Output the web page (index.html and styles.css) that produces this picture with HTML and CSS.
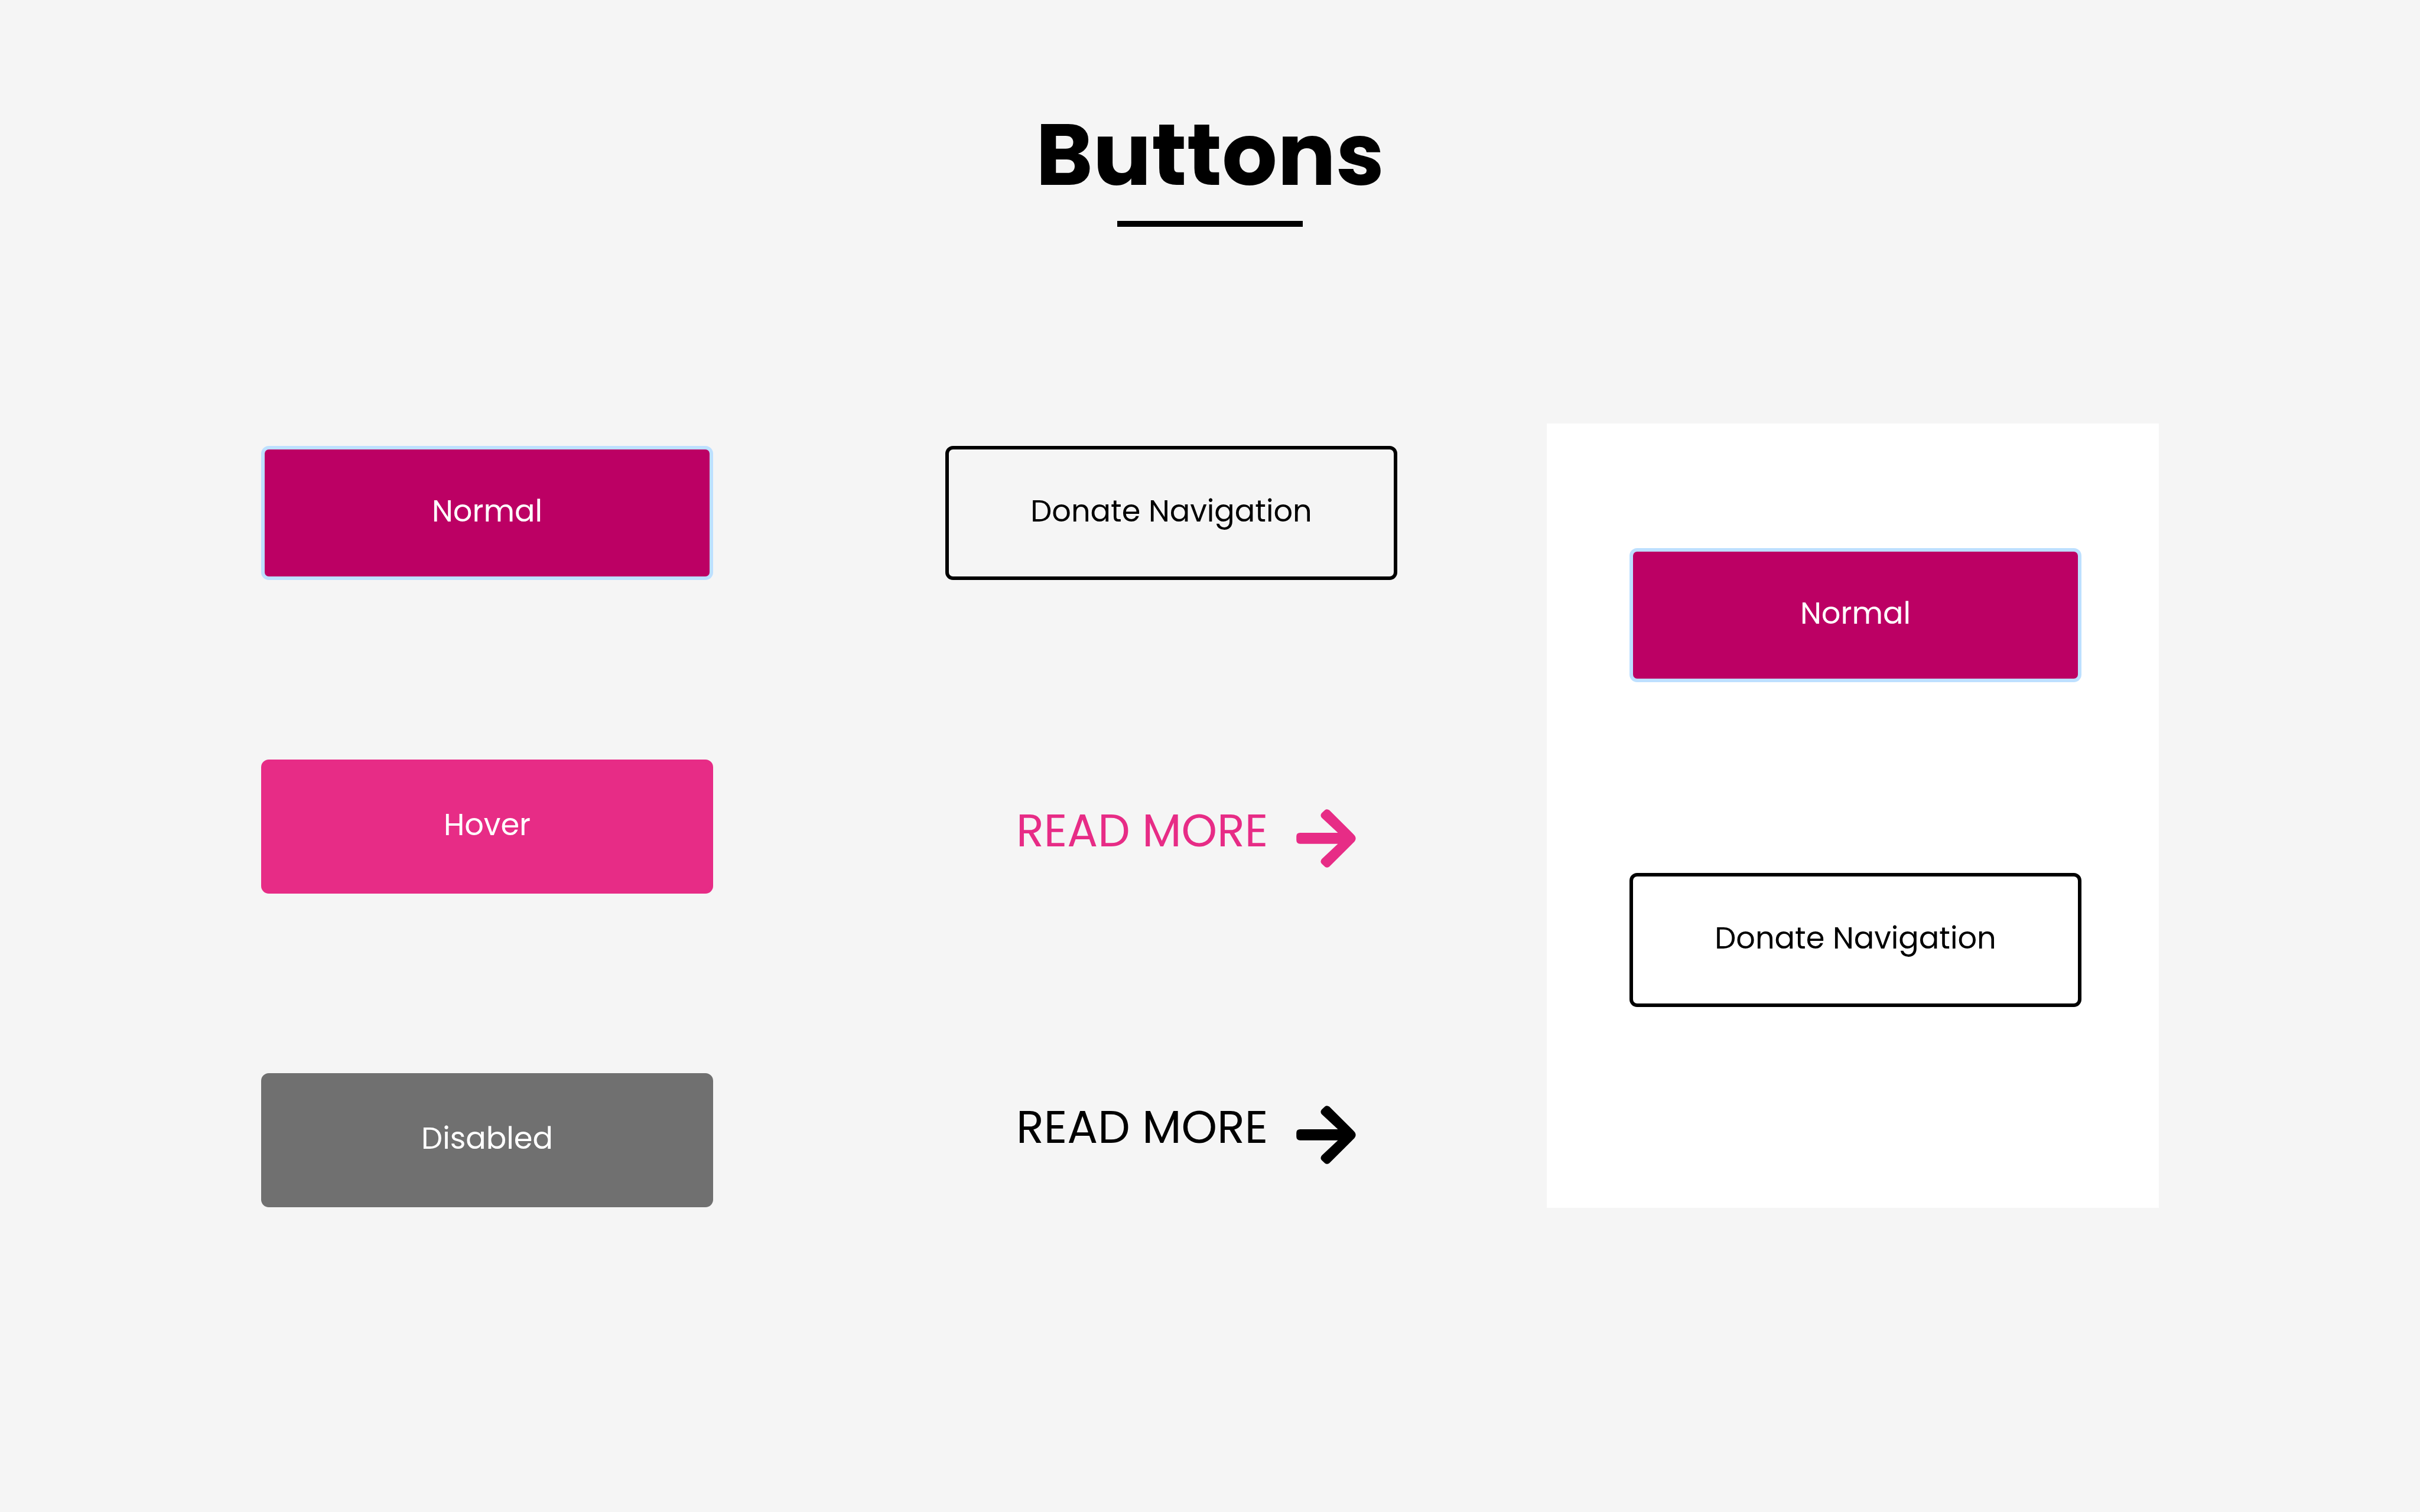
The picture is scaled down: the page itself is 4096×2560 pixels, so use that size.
FILE: index.html
```html
<!DOCTYPE html>
<html lang="en">
<head>
<meta charset="utf-8">
<meta name="viewport" content="width=device-width, initial-scale=1">
<title>Buttons</title>
<link rel="stylesheet" href="styles.css">
</head>
<body>
<svg class="sprite" width="0" height="0" aria-hidden="true">
  <symbol id="arrow" viewBox="0 0 126 124">
    <path d="M8 50H88L54 18.500Q49.500 13.500 53.500 8.500L60.500 1.800Q65 -1.500 70 2.200L120.500 52.500Q131 62 120.500 71.500L70 121.800Q65 125.500 60.500 122.200L53.500 115.500Q49.500 110.500 54 105.500L88 73.500H8Q0 73.500 0 65.500V58Q0 50 8 50Z"/>
  </symbol>
</svg>
<header class="heading">
  <h1 class="title">Buttons</h1>
  <div class="rule"></div>
</header>
<main class="samples">
  <section class="column states">
    <button class="btn primary" type="button">Normal</button>
    <button class="btn hovered" type="button">Hover</button>
    <button class="btn disabled" type="button" disabled>Disabled</button>
  </section>
  <section class="column">
    <button class="btn outline" type="button">Donate Navigation</button>
    <nav class="links">
      <a class="more accent" href="#more"><span class="more-text">READ MORE</span><svg class="arrow" aria-hidden="true"><use href="#arrow"/></svg></a>
      <a class="more" href="#more"><span class="more-text">READ MORE</span><svg class="arrow" aria-hidden="true"><use href="#arrow"/></svg></a>
    </nav>
  </section>
  <section class="panel">
    <button class="btn primary" type="button">Normal</button>
    <button class="btn outline" type="button">Donate Navigation</button>
  </section>
</main>
</body>
</html>
```
FILE: styles.css
```css
* {
  box-sizing: border-box;
}

body {
  margin: 0;
  background: #f5f5f5;
  color: #000;
  font-family: Poppins, Inter, sans-serif;
}

.sprite {
  display: block;
}

.heading {
  display: flex;
  flex-direction: column;
  align-items: center;
  gap: 22px;
  padding-top: 172px;
}

.title {
  margin: 0;
  font-size: 147px;
  line-height: 180px;
  font-weight: 700;
}

.rule {
  width: 314px;
  height: 10px;
  background: #000;
}

.samples {
  display: grid;
  grid-template-columns: 1158fr 1018fr 1036fr;
  padding: 333px 442px 0;
}

.column {
  display: flex;
  flex-direction: column;
  align-items: flex-start;
  padding-top: 38px;
}

.states {
  gap: 304px;
}

.btn {
  width: 765px;
  height: 227px;
  padding: 0 0 8px;
  border: 6px solid transparent;
  border-radius: 13px;
  background: none;
  color: #fff;
  font-family: inherit;
  font-size: 51px;
  line-height: 64px;
}

.primary {
  border-color: #bde0ff;
  background: #bc0064;
}

.hovered {
  border-color: #e72c86;
  background: #e72c86;
}

.disabled {
  border-color: #707070;
  background: #707070;
}

.outline {
  border-color: #000;
  color: #000;
}

.links {
  display: flex;
  flex-direction: column;
  gap: 403px;
  padding: 388px 0 0 120px;
}

.more {
  display: flex;
  align-items: flex-start;
  gap: 48px;
  color: #000;
  text-decoration: none;
}

.accent {
  color: #e72c86;
}

.more-text {
  font-size: 77px;
  line-height: 72px;
}

.arrow {
  width: 101px;
  height: 99px;
  fill: currentColor;
}

.panel {
  display: flex;
  flex-direction: column;
  align-items: flex-end;
  gap: 323px;
  padding: 211px 131px 340px;
  background: #fff;
}
```
